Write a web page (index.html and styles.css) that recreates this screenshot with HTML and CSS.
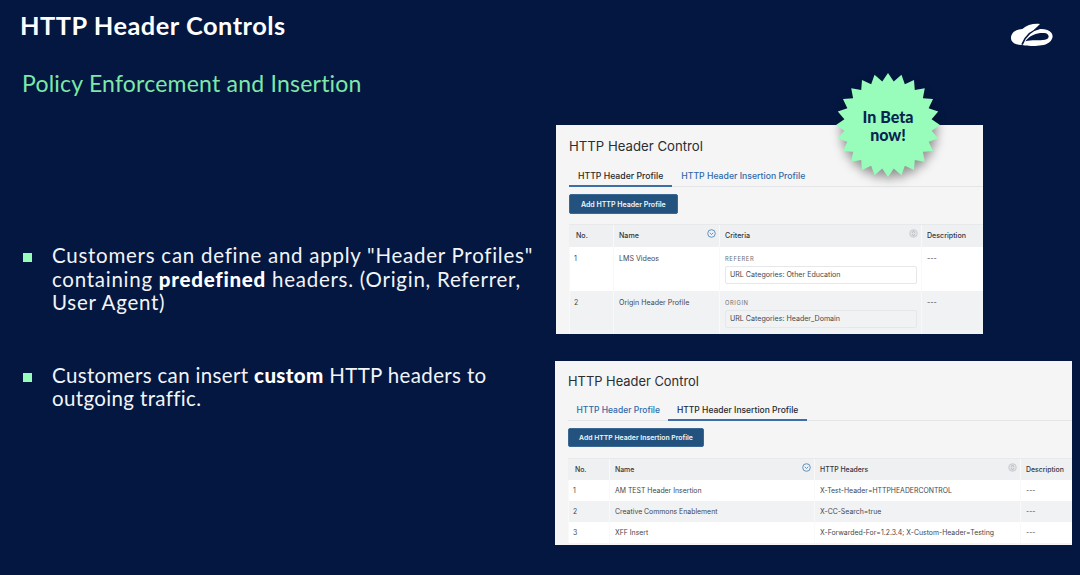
FILE: index.html
```html
<!DOCTYPE html>
<html lang="en">
<head>
    <meta charset="UTF-8">
    <title>HTTP Header Controls</title>
    <link rel="stylesheet" href="styles.css">
</head>
<body>
    <div class="slide">
        <header class="top">
            <h1 class="title">HTTP Header Controls</h1>
            <svg class="logo" width="42" height="23" viewBox="63 39 126 69">
                <path fill="#fff" d="M150 42 C130 40 110 45 97 57 C78 58 63 68 63 84 C63 98 78 105 95 105 C120 110 165 110 178 97 C192 85 192 68 172 60 C158 55 142 56 130 62 C135 55 145 48 150 42 Z"/>
                <path fill="none" stroke="#031741" stroke-width="5" d="M152 54 C125 60 106 78 96 104"/>
                <path fill="#031741" d="M106 94 C122 72 150 66 168 70 C180 75 178 88 165 89 C148 92 125 88 106 94 Z"/>
            </svg>
        </header>
        <h2 class="subtitle">Policy Enforcement and Insertion</h2>

        <main class="content">
            <ul class="points">
                <li class="point point-wide">Customers can define and apply "Header Profiles"<br>containing <b>predefined</b> headers. (Origin, Referrer,<br>User Agent)</li>
                <li class="point">Customers can insert <b>custom</b> HTTP headers to<br>outgoing traffic.</li>
            </ul>

            <div class="shots">
                <section class="panel panel-profile">
                    <div class="badge">
                        <svg class="star" width="104" height="104" viewBox="0 0 104 104">
                            <polygon fill="#98fdbb" points="52,0 57.74,8.38 65.46,1.77 68.84,11.35 78,6.97 78.79,17.09 88.77,15.23 86.91,25.21 97.03,26 92.65,35.16 102.23,38.54 95.62,46.26 104,52 95.62,57.74 102.23,65.46 92.65,68.84 97.03,78 86.91,78.79 88.77,88.77 78.79,86.91 78,97.03 68.84,92.65 65.46,102.23 57.74,95.62 52,104 46.26,95.62 38.54,102.23 35.16,92.65 26,97.03 25.21,86.91 15.23,88.77 17.09,78.79 6.97,78 11.35,68.84 1.77,65.46 8.38,57.74 0,52 8.38,46.26 1.77,38.54 11.35,35.16 6.97,26 17.09,25.21 15.23,15.23 25.21,17.09 26,6.97 35.16,11.35 38.54,1.77 46.26,8.38"/>
                        </svg>
                        <span class="badge-text">In Beta<br>now!</span>
                    </div>
                    <h3 class="panel-title">HTTP Header Control</h3>
                    <div class="tabs">
                        <span class="tab active">HTTP Header Profile</span>
                        <span class="tab">HTTP Header Insertion Profile</span>
                    </div>
                    <button class="add-btn">Add HTTP Header Profile</button>
                    <div class="grid">
                        <div class="row head">
                            <div class="cell">No.</div>
                            <div class="cell sortable">Name
                                <svg class="sort-icon" width="9" height="9" viewBox="0 0 9 9"><circle cx="4.5" cy="4.5" r="3.8" fill="none" stroke="#3f7cb5" stroke-width=".8"/><path d="M2.8 3.8 L4.5 5.5 L6.2 3.8" fill="none" stroke="#3f7cb5" stroke-width=".8"/></svg>
                            </div>
                            <div class="cell sortable">Criteria
                                <svg class="sort-icon" width="9" height="9" viewBox="0 0 9 9"><circle cx="4.5" cy="4.5" r="3.8" fill="#e0e1e3" stroke="#c4c6ca" stroke-width=".8"/><path d="M3 3.6 L4.5 2.3 L6 3.6 M3 5.4 L4.5 6.7 L6 5.4" fill="none" stroke="#a9abb0" stroke-width=".8"/></svg>
                            </div>
                            <div class="cell">Description</div>
                        </div>
                        <div class="row tall">
                            <div class="cell cell-no">1</div>
                            <div class="cell">LMS Videos</div>
                            <div class="cell">
                                <div class="crit-label">REFERER</div>
                                <div class="crit-box">URL Categories: Other Education</div>
                            </div>
                            <div class="cell">---</div>
                        </div>
                        <div class="row tall alt">
                            <div class="cell cell-no">2</div>
                            <div class="cell">Origin Header Profile</div>
                            <div class="cell">
                                <div class="crit-label">ORIGIN</div>
                                <div class="crit-box">URL Categories: Header_Domain</div>
                            </div>
                            <div class="cell">---</div>
                        </div>
                    </div>
                </section>

                <section class="panel panel-insert">
                    <h3 class="panel-title">HTTP Header Control</h3>
                    <div class="tabs">
                        <span class="tab">HTTP Header Profile</span>
                        <span class="tab active">HTTP Header Insertion Profile</span>
                    </div>
                    <button class="add-btn">Add HTTP Header Insertion Profile</button>
                    <div class="grid">
                        <div class="row head">
                            <div class="cell">No.</div>
                            <div class="cell sortable">Name
                                <svg class="sort-icon" width="9" height="9" viewBox="0 0 9 9"><circle cx="4.5" cy="4.5" r="3.8" fill="none" stroke="#3f7cb5" stroke-width=".8"/><path d="M2.8 3.8 L4.5 5.5 L6.2 3.8" fill="none" stroke="#3f7cb5" stroke-width=".8"/></svg>
                            </div>
                            <div class="cell sortable">HTTP Headers
                                <svg class="sort-icon" width="9" height="9" viewBox="0 0 9 9"><circle cx="4.5" cy="4.5" r="3.8" fill="#e0e1e3" stroke="#c4c6ca" stroke-width=".8"/><path d="M3 3.6 L4.5 2.3 L6 3.6 M3 5.4 L4.5 6.7 L6 5.4" fill="none" stroke="#a9abb0" stroke-width=".8"/></svg>
                            </div>
                            <div class="cell">Description</div>
                        </div>
                        <div class="row">
                            <div class="cell cell-no">1</div>
                            <div class="cell">AM TEST Header Insertion</div>
                            <div class="cell">X-Test-Header=HTTPHEADERCONTROL</div>
                            <div class="cell">---</div>
                        </div>
                        <div class="row alt">
                            <div class="cell cell-no">2</div>
                            <div class="cell">Creative Commons Enablement</div>
                            <div class="cell">X-CC-Search=true</div>
                            <div class="cell">---</div>
                        </div>
                        <div class="row">
                            <div class="cell cell-no">3</div>
                            <div class="cell">XFF Insert</div>
                            <div class="cell">X-Forwarded-For=1.2.3.4; X-Custom-Header=Testing</div>
                            <div class="cell">---</div>
                        </div>
                    </div>
                </section>
            </div>
        </main>
    </div>
</body>
</html>
```

FILE: styles.css
```css
* {
    padding: 0;
    margin: 0;
    box-sizing: border-box;
}
body {
    background-color: #031741;
    overflow: hidden;
}
.slide {
    width: 1080px;
    height: 575px;
    font-family: "Lato", "Liberation Sans", sans-serif;
    color: #fff;
}
.top {
    display: flex;
    justify-content: space-between;
    padding: 9px 27px 0 20px;
}
.title {
    font-size: 25.4px;
    line-height: 32px;
    font-weight: 700;
    letter-spacing: .5px;
}
.logo {
    margin-top: 14px;
}
.subtitle {
    margin-top: 22px;
    padding-left: 22px;
    height: 57px;
    font-size: 23px;
    line-height: 30px;
    font-weight: 400;
    letter-spacing: .22px;
    color: #7fe7a8;
}
.content {
    display: grid;
    grid-template-columns: 555px 1fr;
}

/* left column */
.points {
    list-style: none;
    padding: 119px 0 0 23px;
}
.point {
    position: relative;
    padding-left: 29px;
    margin-bottom: 49px;
    font-size: 20.5px;
    line-height: 23.5px;
    letter-spacing: .35px;
    white-space: nowrap;
    color: #f2f4f7;
}
.point-wide {
    letter-spacing: .74px;
}
.point::before {
    content: "";
    position: absolute;
    left: 0;
    top: 9px;
    width: 9px;
    height: 9px;
    background-color: #98fdbb;
}
.point b {
    font-weight: 900;
    color: #fff;
}

/* right column */
.shots {
    display: flex;
    flex-direction: column;
    align-items: flex-start;
    gap: 27px;
}
.panel {
    position: relative;
    background-color: #f5f5f6;
    color: #2b2e33;
    font-family: "Inter", "Liberation Sans", sans-serif;
}
.panel-profile {
    width: 427px;
    height: 209px;
    margin-left: 1px;
    padding: 12px 0 0 13px;
}
.panel-insert {
    width: 517px;
    height: 184px;
    padding: 12px 0 0 13px;
}
.panel-title {
    font-size: 13.2px;
    line-height: 18px;
    font-weight: 400;
}
.tabs {
    display: flex;
    margin-top: 12px;
    height: 20px;
    border-bottom: 1px solid #e4e5e8;
    font-size: 8.7px;
    font-weight: 500;
    line-height: 18px;
    color: #2f6aa8;
}
.tab {
    padding: 0 9px;
    margin-bottom: -1px;
    border-bottom: 2px solid transparent;
}
.tab.active {
    color: #26292e;
    border-bottom-color: #3c6fa6;
}
.add-btn {
    display: block;
    margin-top: 7px;
    height: 20px;
    padding: 0 11px;
    background-color: #23527f;
    border: 1px solid #3a6794;
    border-radius: 2px;
    color: #f4f6f8;
    font-family: inherit;
    font-size: 7px;
    font-weight: 600;
}
.grid {
    margin-top: 10px;
    overflow: hidden;
    font-size: 7.1px;
    color: #44474d;
}
.row {
    display: grid;
    height: 21px;
    background-color: #fff;
    line-height: 21px;
}
.row.head {
    height: 23px;
    line-height: 22px;
    background-color: #eff0f2;
    font-weight: 500;
    color: #33363b;
    border-top: 1px solid #e8e9eb;
}
.row.alt {
    background-color: #f1f2f4;
}
.row.tall {
    height: 43.5px;
    line-height: 12px;
}
.row.tall .cell {
    padding-top: 6px;
}
.panel-profile .row {
    grid-template-columns: 44px 106px 202px 1fr;
}
.panel-insert .row {
    grid-template-columns: 41px 205px 206px 1fr;
}

/* second panel sits a little tighter */
.panel-insert .panel-title {
    font-size: 12.9px;
}
.panel-insert .tabs {
    margin-top: 10px;
    font-size: 8.5px;
    line-height: 19px;
}
.panel-insert .tab {
    padding: 0 8.5px;
}
.panel-insert .add-btn {
    height: 19px;
    padding: 0 10px;
    font-size: 6.85px;
}
.panel-insert .grid {
    margin-top: 11px;
    font-size: 6.9px;
}
.panel-insert .row.head {
    height: 22px;
}
.cell {
    position: relative;
    padding: 0 5px;
    border-left: 1px solid #f9f9fa;
    white-space: nowrap;
}
.row.head .cell:first-child {
    padding-left: 7px;
    border-left: 0;
}
.cell-no {
    padding-left: 4px;
}
.sort-icon {
    position: absolute;
    right: 3px;
    top: 4px;
}
.crit-label {
    font-size: 5.8px;
    letter-spacing: .6px;
    color: #6c6f75;
}
.crit-box {
    margin-top: 1px;
    width: 192px;
    height: 18px;
    padding-left: 4px;
    line-height: 16px;
    border: 1px solid #e6e7ea;
    border-radius: 2px;
}

/* star overlay */
.badge {
    position: absolute;
    left: 280px;
    top: -52px;
    width: 104px;
    height: 104px;
    display: flex;
    align-items: center;
    justify-content: center;
}
.star {
    position: absolute;
    left: 0;
    top: 0;
    filter: drop-shadow(1px 5px 5px rgba(0, 0, 0, .4));
}
.badge-text {
    position: relative;
    top: 1px;
    font-family: "Lato", "Liberation Sans", sans-serif;
    font-size: 16px;
    line-height: 18.5px;
    font-weight: 900;
    text-align: center;
    color: #0a2450;
}
```
